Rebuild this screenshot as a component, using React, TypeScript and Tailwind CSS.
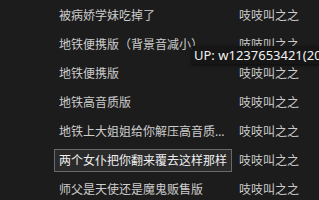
import React from "react";

const rows: { title: string; author: string; boxed?: boolean }[] = [
  { title: "被病娇学妹吃掉了", author: "吱吱叫之之" },
  { title: "地铁便携版（背景音减小）", author: "吱吱叫之之" },
  { title: "地铁便携版", author: "吱吱叫之之" },
  { title: "地铁高音质版", author: "吱吱叫之之" },
  { title: "地铁上大姐姐给你解压高音质版本", author: "吱吱叫之之" },
  { title: "两个女仆把你翻来覆去这样那样", author: "吱吱叫之之", boxed: true },
  { title: "师父是天使还是魔鬼贩售版", author: "吱吱叫之之" },
];

export default function App() {
  return (
    <div
      className="relative w-[319px] h-[200px] overflow-hidden bg-[#1c1c1c]"
      style={{ fontFamily: '"Noto Sans", "Noto Sans CJK SC", sans-serif' }}
    >
      <div className="flex flex-col pt-[1px]">
        {rows.map((r, i) => (
          <div key={i} className="flex items-center h-[29px] text-[12px] leading-[16px] text-[#cdcdcd]">
            <div className="w-[180px] pl-[54px] shrink-0">
              {r.boxed ? (
                <div className="inline-block whitespace-nowrap border border-[#6a6a6a] bg-[#2a2a2a] text-[#eeeeee] px-[4px] py-[2px] h-[23px] leading-[17px]">
                  {r.title}
                </div>
              ) : (
                <div className="pl-[5px] w-[174px] whitespace-nowrap overflow-hidden text-ellipsis">
                  {r.title}
                </div>
              )}
            </div>
            <div className="pl-[59px] whitespace-nowrap">{r.author}</div>
          </div>
        ))}
      </div>
      <div className="absolute left-[192px] top-[46px] h-[18px] pl-[2px] pr-[4px] bg-[#161616] shadow-[0_1px_3px_rgba(0,0,0,0.6)] whitespace-nowrap text-[13px] leading-[18px] text-[#f2f2f2]">
        UP: w1237653421(2022)
      </div>
    </div>
  );
}
